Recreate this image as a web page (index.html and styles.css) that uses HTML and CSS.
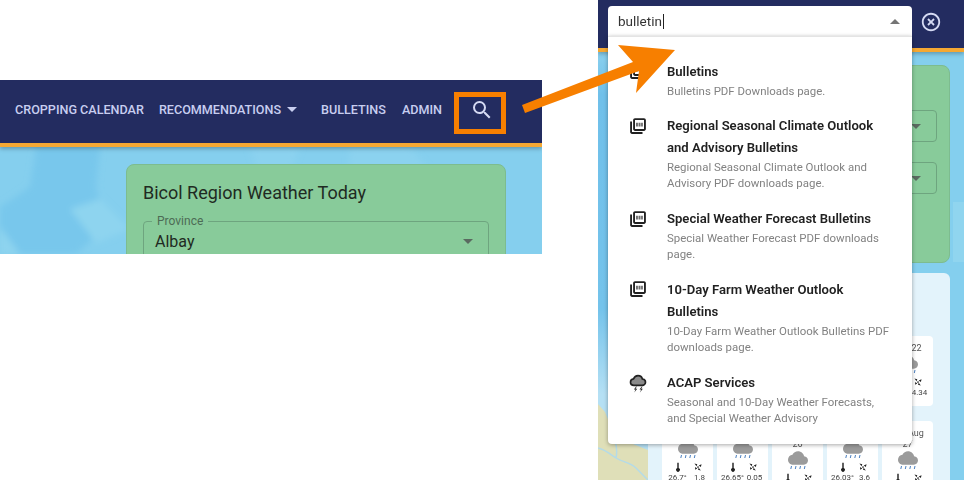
FILE: index.html
```html
<!DOCTYPE html>
<html lang="en">
<head>
<meta charset="utf-8">
<title>Bicol Region Weather</title>
<link rel="stylesheet" href="styles.css">
</head>
<body>
<svg class="sprite" aria-hidden="true">
  <defs>
    <filter id="soft"><feGaussianBlur stdDeviation="3"/></filter>
    <symbol id="pdf" viewBox="0 0 24 24">
      <path d="M20 1.500H8c-1.400 0-2.500 1.100-2.500 2.500v12c0 1.400 1.100 2.500 2.500 2.500h12c1.400 0 2.500-1.100 2.500-2.500V4c0-1.400-1.100-2.500-2.500-2.500zm0 14.500H8V4h12v12zM4 6H1.500v14c0 1.400 1.100 2.500 2.500 2.500h14V20H4V6z" fill="#212121"/>
      <path d="M9.300 7.500h2.600v5H9.300zM12.700 7.500h2.700v5h-2.700zM16.100 7.500h2.400v5h-2.400z" fill="#6f6f6f"/>
    </symbol>
    <symbol id="cloud" viewBox="0 0 24 24">
      <path d="M19.350 10.040C18.670 6.590 15.640 4 12 4 9.110 4 6.600 5.640 5.350 8.040 2.340 8.360 0 10.910 0 14c0 3.310 2.690 6 6 6h13c2.760 0 5-2.240 5-5 0-2.640-2.050-4.780-4.650-4.960z" fill="#9b9b9b"/>
    </symbol>
    <symbol id="rain" viewBox="0 0 20 5">
      <path d="M3.500 1L2.800 4M8 1l-.7 3M12.500 1l-.7 3M17 1l-.7 3" stroke="#4a7fc0" stroke-width="1" fill="none"/>
    </symbol>
    <symbol id="thermo" viewBox="0 0 10 14">
      <path d="M4 1h2v7.500a2.600 2.600 0 1 1-2 0z" fill="#222"/>
    </symbol>
    <symbol id="fan" viewBox="0 0 14 14">
      <path d="M2 2l4 1-1 3zM12 3l-1 4-3-2zM11 12l-4-1 1-3zM3 11l0-4 3 2z" fill="#222"/>
      <circle cx="7" cy="7" r="1.200" fill="#222"/>
    </symbol>
  </defs>
</svg>

<main class="canvas">
  <section class="shot shot-left">
    <svg class="map" viewBox="0 0 542 107" preserveAspectRatio="none" aria-hidden="true">
      <rect width="542" height="107" fill="#85cfee"/>
      <g filter="url(#soft)">
        <path d="M36 0h64l-4 40 10 40-30 27H0V60l30-20z" fill="#78c7ec"/>
        <path d="M250 0h50l-10 24-30 6zM350 0h60l24 30-20 40-40 37H345z" fill="#8bd2ef"/>
        <path d="M70 62l30-10 30 30-34 14zM0 80l20 27H0z" fill="#8ed4ef"/>
      </g>
    </svg>
    <nav class="nav nav-main">
      <a class="nav-link nav-first">CROPPING CALENDAR</a>
      <a class="nav-link nav-menu">RECOMMENDATIONS<span class="caret caret-nav"></span></a>
      <a class="nav-link">BULLETINS</a>
      <a class="nav-link">ADMIN</a>
      <span class="search-box">
        <svg class="search-icon" viewBox="0 0 24 24"><path d="M15.500 14h-.790l-.280-.270A6.470 6.470 0 0 0 16 9.500 6.500 6.500 0 1 0 9.500 16c1.610 0 3.090-.590 4.230-1.570l.270.280v.790l5 4.990L20.490 19l-4.990-5zm-6 0C7.010 14 5 11.990 5 9.500S7.010 5 9.500 5 14 7.010 14 9.500 11.990 14 9.500 14z" fill="#d5daf3"/></svg>
      </span>
    </nav>
    <div class="content content-left">
      <div class="green-card">
        <h2 class="card-title">Bicol Region Weather Today</h2>
        <div class="field">
          <span class="field-label">Province</span>
          <span class="field-value">Albay</span>
          <span class="caret caret-field"></span>
        </div>
      </div>
    </div>
  </section>

  <section class="shot shot-right">
    <svg class="map" viewBox="0 0 366 428" preserveAspectRatio="none" aria-hidden="true">
      <defs>
        <linearGradient id="sea" x1="0" y1="0" x2="0" y2="1">
          <stop offset="0" stop-color="#8ad0ee"/>
          <stop offset=".1" stop-color="#70c0ea"/>
          <stop offset=".6" stop-color="#74c3eb"/>
          <stop offset=".8" stop-color="#b5e0f4"/>
        </linearGradient>
      </defs>
      <rect width="366" height="428" fill="#84cfee"/>
      <rect width="50" height="428" fill="url(#sea)"/>
      <path d="M0 352l7 8 5 12 6 8 12 10 20 8v30H0z" fill="#dfdfb8"/>
      <path d="M0 396c8 2 12 6 18 10s14 4 20 10 8 8 12 12M12 380c6 8 8 16 6 26" fill="none" stroke="#b4dbe8" stroke-width="1.500"/>
      <path d="M355 150h11v60h-11z" fill="#90d5ef"/>
    </svg>
    <nav class="nav nav-search">
      <svg class="close-icon" viewBox="0 0 24 24"><path d="M14.590 8L12 10.590 9.410 8 8 9.410 10.590 12 8 14.590 9.410 16 12 13.410 14.590 16 16 14.590 13.410 12 16 9.410 14.590 8zM12 2C6.470 2 2 6.470 2 12s4.470 10 10 10 10-4.470 10-10S17.530 2 12 2zm0 18c-4.410 0-8-3.590-8-8s3.590-8 8-8 8 3.590 8 8-3.590 8-8 8z" fill="#d5daf3"/></svg>
    </nav>
    <div class="content content-right">
      <div class="green-card green-card-full">
        <div class="field field-blank"><span class="caret caret-field"></span></div>
        <div class="field field-blank"><span class="caret caret-field"></span></div>
      </div>
      <div class="forecast">
        <div class="forecast-grid">
          <article class="day day-last-top">
            <span class="day-date">Aug 22</span>
            <span class="cloud"><svg class="cloud-icon"><use href="#cloud"/></svg><svg class="rain"><use href="#rain"/></svg></span>
            <div class="day-icons"><svg class="mini"><use href="#thermo"/></svg><svg class="mini"><use href="#fan"/></svg></div>
            <div class="day-values"><span>26.4°</span><span>4.34</span></div>
          </article>
          <article class="day day-row">
            <span class="day-date"></span>
            <span class="cloud"><svg class="cloud-icon"><use href="#cloud"/></svg><svg class="rain"><use href="#rain"/></svg></span>
            <div class="day-icons"><svg class="mini"><use href="#thermo"/></svg><svg class="mini"><use href="#fan"/></svg></div>
            <div class="day-values"><span>26.7°</span><span>1.8</span></div>
          </article>
          <article class="day day-row">
            <span class="day-date"></span>
            <span class="cloud"><svg class="cloud-icon"><use href="#cloud"/></svg><svg class="rain"><use href="#rain"/></svg></span>
            <div class="day-icons"><svg class="mini"><use href="#thermo"/></svg><svg class="mini"><use href="#fan"/></svg></div>
            <div class="day-values"><span>26.65°</span><span>0.05</span></div>
          </article>
          <article class="day day-row">
            <span class="day-date"><br>26</span>
            <span class="cloud"><svg class="cloud-icon"><use href="#cloud"/></svg><svg class="rain"><use href="#rain"/></svg></span>
            <div class="day-icons"><svg class="mini"><use href="#thermo"/></svg><svg class="mini"><use href="#fan"/></svg></div>
          </article>
          <article class="day day-row">
            <span class="day-date"></span>
            <span class="cloud"><svg class="cloud-icon"><use href="#cloud"/></svg><svg class="rain"><use href="#rain"/></svg></span>
            <div class="day-icons"><svg class="mini"><use href="#thermo"/></svg><svg class="mini"><use href="#fan"/></svg></div>
            <div class="day-values"><span>26.03°</span><span>3.6</span></div>
          </article>
          <article class="day day-row">
            <span class="day-date">Tue Aug<br>27</span>
            <span class="cloud"><svg class="cloud-icon"><use href="#cloud"/></svg><svg class="rain"><use href="#rain"/></svg></span>
            <div class="day-icons"><svg class="mini"><use href="#thermo"/></svg><svg class="mini"><use href="#fan"/></svg></div>
          </article>
        </div>
      </div>
    </div>

    <div class="combo">
      <div class="combo-input">
        <span class="combo-text">bulletin</span><span class="text-cursor"></span>
        <span class="caret caret-up"></span>
      </div>
      <ul class="results">
        <li class="result">
          <svg class="result-icon"><use href="#pdf"/></svg>
          <div class="result-body"><strong class="result-title">Bulletins</strong><p class="result-desc">Bulletins PDF Downloads page.</p></div>
        </li>
        <li class="result">
          <svg class="result-icon"><use href="#pdf"/></svg>
          <div class="result-body"><strong class="result-title">Regional Seasonal Climate Outlook and Advisory Bulletins</strong><p class="result-desc">Regional Seasonal Climate Outlook and Advisory PDF downloads page.</p></div>
        </li>
        <li class="result">
          <svg class="result-icon"><use href="#pdf"/></svg>
          <div class="result-body"><strong class="result-title">Special Weather Forecast Bulletins</strong><p class="result-desc">Special Weather Forecast PDF downloads page.</p></div>
        </li>
        <li class="result">
          <svg class="result-icon"><use href="#pdf"/></svg>
          <div class="result-body"><strong class="result-title">10-Day Farm Weather Outlook Bulletins</strong><p class="result-desc">10-Day Farm Weather Outlook Bulletins PDF downloads page.</p></div>
        </li>
        <li class="result">
          <svg class="result-icon result-icon-acap" viewBox="0 0 24 24">
            <path d="M12 1.500c2.900 0 5.300 1.900 5.800 4.500 2.400.2 4.200 2 4.200 4.200 0 2.400-2 4.300-4.400 4.300H6.600C4 14.500 2 12.600 2 10.200 2 8 3.800 6.100 6 5.900 7 3.300 9.300 1.500 12 1.500z" fill="#8a8a8a" stroke="#212121" stroke-width="2.200"/>
            <path d="M9.500 16l-3 4h2.300L7 24l4-5H8.700l1.800-3zM17 16l-3 4h2.300L14.500 24l4-5h-2.300l1.800-3z" fill="#212121"/>
          </svg>
          <div class="result-body"><strong class="result-title">ACAP Services</strong><p class="result-desc">Seasonal and 10-Day Weather Forecasts, and Special Weather Advisory</p></div>
        </li>
      </ul>
    </div>
  </section>

  <svg class="arrow" viewBox="0 0 964 480" aria-hidden="true">
    <polygon points="522,105 633,62 618,45 675,50 636,93 639,71 525,113" fill="#f77f00"/>
  </svg>
</main>
</body>
</html>
```

FILE: styles.css
```css
* { box-sizing: border-box; }
html, body { margin: 0; padding: 0; background: #fff; }
body { font-family: Roboto, "Liberation Sans", sans-serif; color: #212121; overflow: hidden; }
.sprite { position: absolute; width: 0; height: 0; }

.canvas { position: relative; display: flex; align-items: flex-start; width: 964px; height: 480px; overflow: hidden; }
.shot { position: relative; flex: none; overflow: hidden; }
.shot-left { width: 542px; height: 174px; margin-top: 80px; }
.shot-right { width: 366px; height: 480px; margin-left: 56px; filter: blur(.35px); }
.map { position: absolute; left: 0; bottom: 0; width: 100%; height: calc(100% - 67px); }
.shot-right .map { height: calc(100% - 52px); }

.nav { position: relative; display: flex; align-items: center; background: #232c60; border-bottom: 4px solid #f5a833; box-shadow: 0 2px 4px rgba(0,0,0,.25); }
.nav-main { height: 67px; padding: 0 0 5px 15px; }
.nav-search { height: 52px; justify-content: flex-end; padding-right: 22px; padding-bottom: 4px; }
.nav-link { font-size: 12.600px; font-weight: 500; color: #c8cef0; white-space: nowrap; margin-right: 16px; }
.nav-first { margin-right: 15px; }
.nav-menu { display: flex; align-items: center; margin-right: 24px; }
.search-box { display: flex; align-items: center; justify-content: center; align-self: flex-start; width: 52px; height: 42px; margin: 12px 0 0 -4px; padding: 0 0 6px 4px; border: 5px solid #f77f00; }
.search-icon { flex: none; width: 24px; height: 24px; }
.close-icon { width: 22px; height: 22px; }

.caret { display: block; width: 0; height: 0; border-left: 5.500px solid transparent; border-right: 5.500px solid transparent; border-top: 5.500px solid #5a6a60; }
.caret-nav { margin-left: 6px; border-top-color: #c8cef0; }
.caret-field { margin-left: auto; }
.caret-up { margin-left: auto; border-top: 0; border-left-width: 5px; border-right-width: 5px; border-bottom: 5px solid #757575; }

.content { position: relative; }
.content-left { padding: 17px 0 0 126px; }
.content-right { display: flex; flex-direction: column; gap: 10px; padding: 13px 14px 0 50px; }

.green-card { background: #88cb9a; border: 1px solid #7dbc8f; border-radius: 8px; padding: 15px 16px; width: 380px; height: 200px; }
.green-card-full { display: flex; flex-direction: column; gap: 20px; width: 302px; height: 198px; padding: 44px 12px 0 16px; }
.card-title { margin: 0 0 15px; font-size: 18px; line-height: 26px; font-weight: 400; color: #1f2a22; }

.field { position: relative; display: flex; align-items: center; flex: none; height: 40px; padding: 0 15px 0 11px; border: 1px solid #6ea57f; border-radius: 4px; }
.field-blank { height: 32px; }
.field-label { position: absolute; left: 8px; top: -7px; padding: 0 5px; background: #88cb9a; font-size: 12px; line-height: 13px; color: #4d6b55; }
.field-value { font-size: 16px; color: #1f2a22; }

.forecast { background: #e3f3fb; border-radius: 6px 6px 0 0; height: 207px; padding: 63px 17px 0 14px; }
.forecast-grid { display: grid; grid-template-columns: repeat(5, 51px); grid-auto-rows: 70px; column-gap: 4px; row-gap: 15px; }
.day { display: flex; flex-direction: column; align-items: center; background: #fff; border-radius: 4px; padding-top: 7px; height: 100%; }
.day-last-top { grid-column: 5; grid-row: 1; }
.day-row { grid-row: 2; }
.day-date { display: block; min-height: 11px; font-size: 9px; line-height: 11px; color: #555; text-align: center; white-space: nowrap; }
.cloud { display: flex; flex-direction: column; align-items: center; margin-top: -2px; }
.cloud-icon { width: 24px; height: 20px; }
.rain { width: 20px; height: 5px; margin-top: -3px; }
.day-icons { display: grid; grid-template-columns: 20px 20px; justify-items: center; margin-top: 3px; }
.mini { width: 10px; height: 10px; }
.day-values { display: grid; grid-template-columns: 24px 20px; justify-items: center; font-size: 8px; line-height: 11px; color: #444; white-space: nowrap; }

.combo { position: absolute; left: 10px; top: 6px; width: 304px; }
.combo-input { display: flex; align-items: center; height: 30px; padding: 0 12px 0 10px; background: #fff; border-radius: 4px 4px 0 0; font-size: 13.500px; color: #333; }
.text-cursor { width: 1px; height: 15px; background: #222; margin-left: 1px; }
.results { list-style: none; margin: 0; padding: 23.500px 20px 18px 21px; display: flex; flex-direction: column; gap: 16.800px; background: #fff; border-top: 1px solid #e4e4e4; border-radius: 0 0 4px 4px; box-shadow: 0 1px 4px rgba(0,0,0,.35); }
.result { display: flex; align-items: flex-start; }
.result-icon { flex: none; width: 18px; height: 18px; margin: 1.500px 20px 0 0; }
.result-icon-acap { height: 19px; margin-top: 2px; }
.result-body { min-width: 0; }
.result-title { display: block; font-size: 13.100px; line-height: 22px; font-weight: 600; color: #212121; }
.result-desc { margin: 0; font-size: 11.450px; line-height: 16px; color: #828282; }

.arrow { position: absolute; left: 0; top: 0; width: 964px; height: 480px; pointer-events: none; }
```
